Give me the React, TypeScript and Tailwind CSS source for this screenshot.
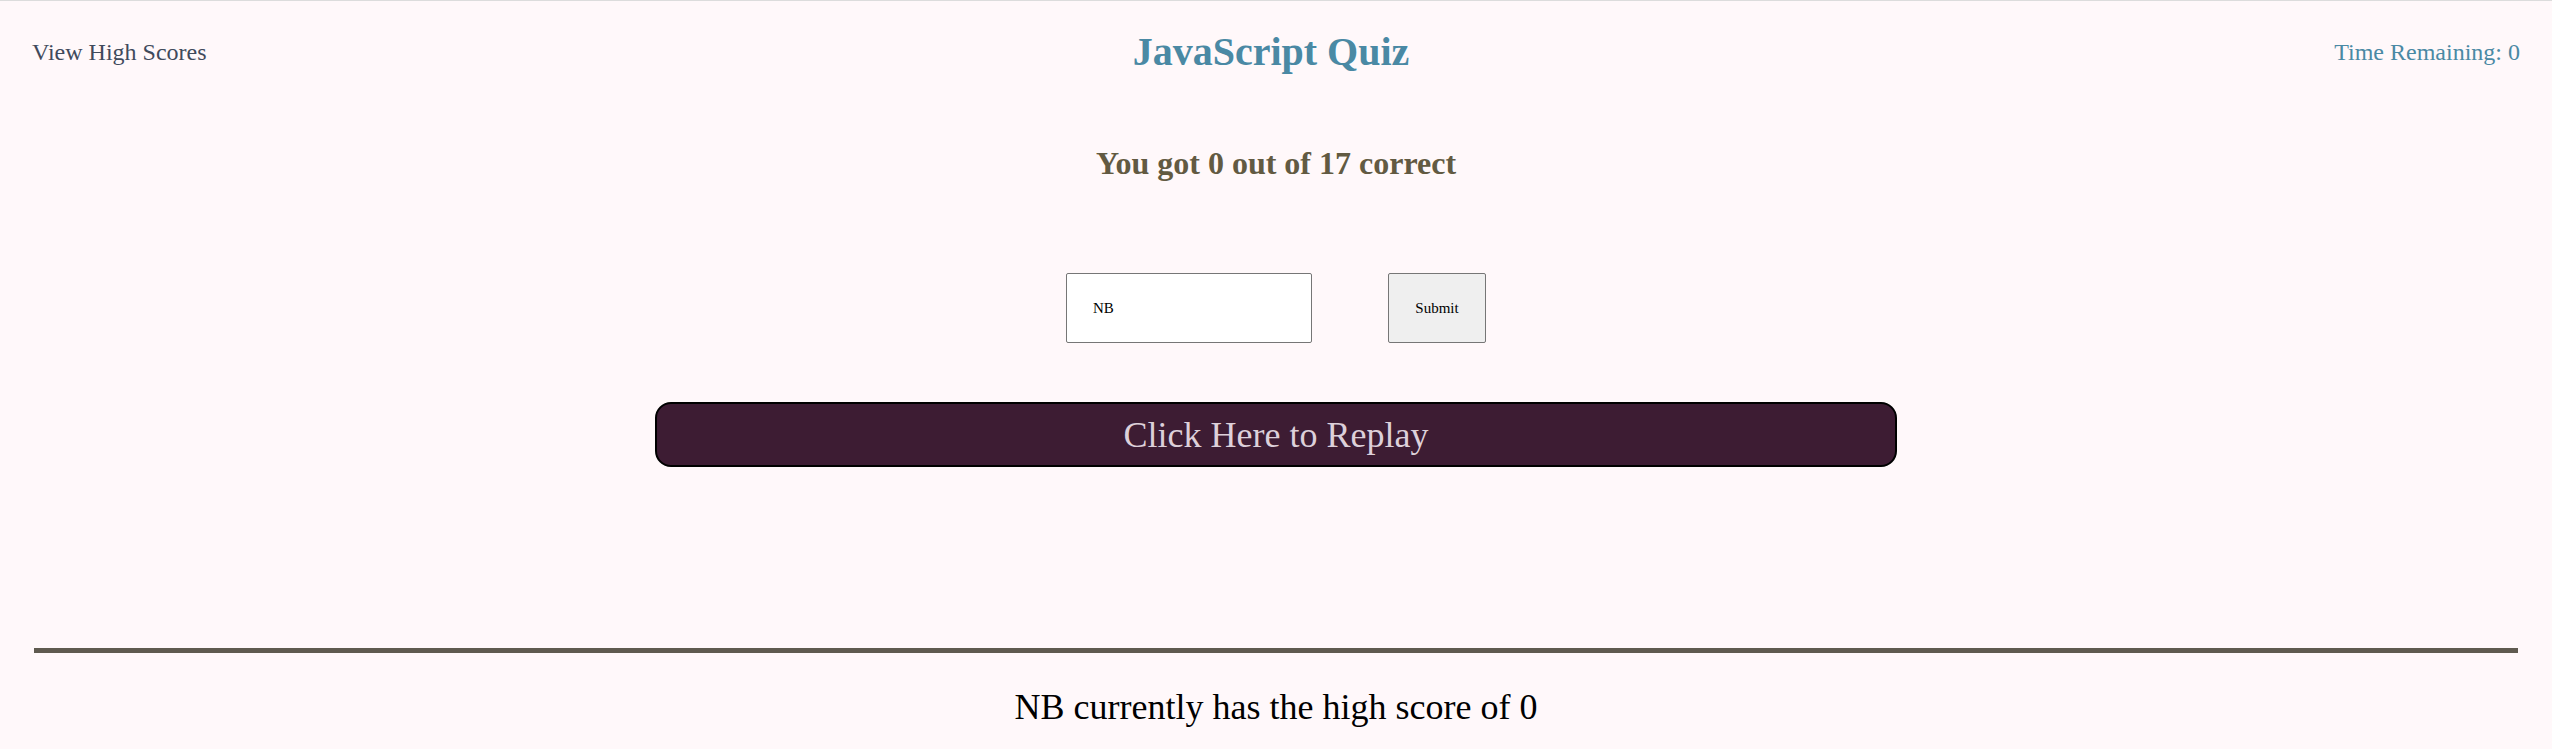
import React, { useState } from 'react';

const App: React.FC = () => {
  const [initials, setInitials] = useState('NB');

  return (
    <div className="min-h-[749px] w-full bg-[#fff8fa] border-t border-[#dcdcdc] font-['Liberation_Serif',serif]">
      {/* Header */}
      <header className="flex items-center justify-between px-[32px] h-[102px]">
        <a className="text-[24px] text-[#3f4a5c] w-[295px]">View High Scores</a>
        <h1 className="text-[40px] font-bold text-[#4a89a4]">JavaScript Quiz</h1>
        <p className="text-[24px] text-[#4a89a4] w-[305px] text-right">Time Remaining: 0</p>
      </header>

      {/* Results */}
      <main className="flex flex-col items-center">
        <h2 className="mt-[36px] text-[32px] font-bold text-[#625a42]">You got 0 out of 17 correct</h2>

        <form className="mt-[86px] flex items-center gap-[76px]" onSubmit={(e) => e.preventDefault()}>
          <input
            type="text"
            value={initials}
            onChange={(e) => setInitials(e.target.value)}
            className="w-[246px] h-[70px] bg-white border border-[#767676] rounded-[2px] px-[26px] text-[15px] text-black outline-none"
          />
          <button type="submit" className="w-[98px] h-[70px] bg-[#efefef] border border-[#767676] rounded-[2px] text-[15px] text-black">
            Submit
          </button>
        </form>

        <button className="mt-[59px] w-[1242px] h-[65px] bg-[#3d1c33] border-2 border-black rounded-[16px] text-[36px] text-[#ddd0da]">
          Click Here to Replay
        </button>
      </main>

      {/* High score */}
      <div className="mt-[181px] mx-[34px] h-[5px] bg-[#5f5a4f]"></div>
      <p className="mt-[31px] text-center text-[36px] leading-[1.3] text-black">NB currently has the high score of 0</p>
    </div>
  );
};

export default App;
